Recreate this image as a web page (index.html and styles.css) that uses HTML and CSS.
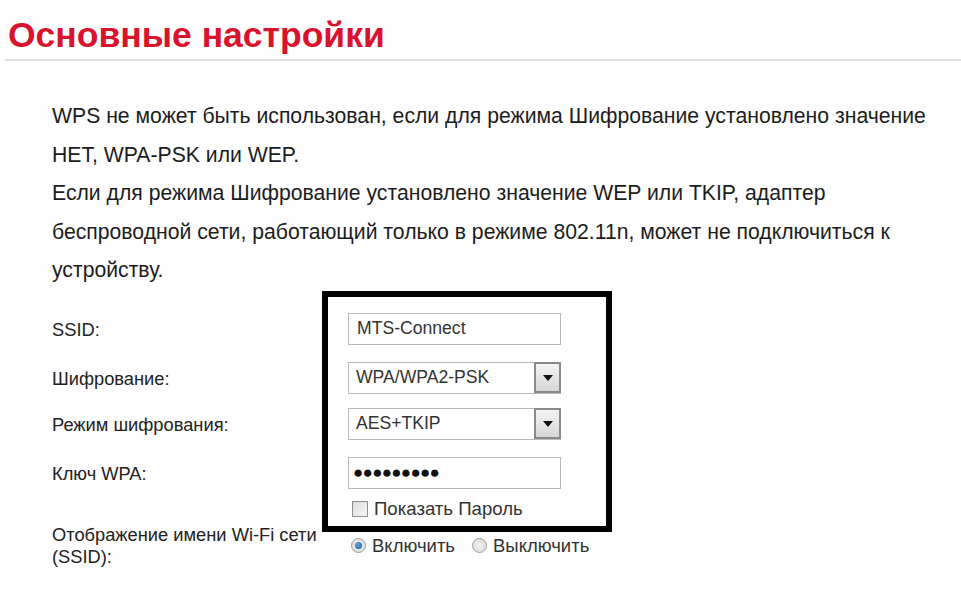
FILE: index.html
```html
<!DOCTYPE html>
<html lang="ru">
<head>
<meta charset="utf-8">
<title>Основные настройки</title>
<link rel="stylesheet" href="styles.css">
</head>
<body>
<div class="page">
  <h1 class="title">Основные настройки</h1>
  <div class="notice">
    <p>WPS не может быть использован, если для режима Шифрование установлено значение<br>НЕТ, WPA-PSK или WEP.</p>
    <p>Если для режима Шифрование установлено значение WEP или TKIP, адаптер<br>беспроводной сети, работающий только в режиме 802.11n, может не подключиться к<br>устройству.</p>
  </div>
  <div class="form">
    <div class="row r-ssid">
      <div class="label">SSID:</div>
      <div class="field"><div class="input">MTS-Connect</div></div>
    </div>
    <div class="row r-enc">
      <div class="label">Шифрование:</div>
      <div class="field"><div class="select"><span class="val">WPA/WPA2-PSK</span><span class="btn"><span class="tri"></span></span></div></div>
    </div>
    <div class="row r-mode">
      <div class="label">Режим шифрования:</div>
      <div class="field"><div class="select"><span class="val">AES+TKIP</span><span class="btn"><span class="tri"></span></span></div></div>
    </div>
    <div class="row r-key">
      <div class="label">Ключ WPA:</div>
      <div class="field"><div class="input pwd">●●●●●●●●●</div></div>
    </div>
    <div class="row r-show">
      <div class="label"></div>
      <div class="field check"><span class="box"></span><span>Показать Пароль</span></div>
    </div>
    <div class="row r-bcast">
      <div class="label">Отображение имени Wi-Fi сети<br>(SSID):</div>
      <div class="field radios">
        <span class="radio on"></span><span class="rtext">Включить</span>
        <span class="radio"></span><span class="rtext">Выключить</span>
      </div>
    </div>
  </div>
  <div class="highlight"></div>
</div>
</body>
</html>
```
FILE: styles.css
```css
html, body {
  margin: 0;
  padding: 0;
  background: #fefefe;
}
body {
  font-family: "Liberation Sans", Arial, sans-serif;
  color: #1a1a1a;
}
.page {
  position: relative;
  width: 961px;
  height: 605px;
  overflow: hidden;
}
.title {
  margin: 0 0 0 5px;
  padding: 13px 0 0 3px;
  height: 46px;
  font-size: 35.5px;
  line-height: 44px;
  font-weight: bold;
  color: #d9122e;
  border-bottom: 2px solid #dedede;
}
.notice {
  padding: 36px 0 0 52px;
  font-size: 21.2px;
  line-height: 38.6px;
  color: #1c1c1c;
}
.notice p {
  margin: 0;
}
.form {
  padding: 0 0 0 52px;
  margin-top: 23px;
  display: flex;
  flex-direction: column;
  font-size: 18.3px;
}
.row {
  display: flex;
  align-items: center;
}
.label {
  width: 296px;
  flex: none;
  color: #222;
  line-height: 22px;
}
.r-ssid .label, .r-enc .label, .r-mode .label, .r-key .label {
  padding-top: 2px;
}
.r-enc { margin-top: 17px; }
.r-mode { margin-top: 14px; }
.r-key { margin-top: 17px; }
.r-show { margin-top: 8px; height: 24px; }
.r-bcast { margin-top: 3px; }
.input, .select {
  box-sizing: border-box;
  width: 213px;
  height: 32px;
  border: 1px solid #b9b9b9;
  background: #fff;
  font-size: 17.6px;
  color: #333;
  display: flex;
  align-items: center;
}
.input {
  padding-left: 8px;
}
.pwd {
  font-size: 17px;
  letter-spacing: -0.7px;
  padding-left: 4px;
  color: #111;
}
.select .val {
  flex: 1;
  padding-left: 7px;
}
.select .btn {
  box-sizing: border-box;
  width: 27px;
  height: 31px;
  margin-right: -1px;
  border: 2px solid #8a8a8a;
  background: linear-gradient(#f4f4f4, #d6d6d6);
  display: flex;
  align-items: center;
  justify-content: center;
}
.tri {
  width: 0;
  height: 0;
  border-left: 5px solid transparent;
  border-right: 5px solid transparent;
  border-top: 6px solid #111;
}
.check {
  display: flex;
  align-items: center;
  font-size: 18.6px;
  color: #333;
}
.check .box {
  box-sizing: border-box;
  width: 16px;
  height: 16px;
  margin: 0 6px 0 4px;
  border: 1px solid #8e8e8e;
  background: linear-gradient(135deg, #dcdcdc, #f6f6f6);
}
.radios {
  display: flex;
  align-items: center;
  font-size: 18.5px;
  color: #333;
}
.radio {
  box-sizing: border-box;
  width: 15px;
  height: 15px;
  border-radius: 50%;
  border: 1px solid #9a9a9a;
  background: radial-gradient(circle, #f2f2f2 0, #d8d8d8 100%);
  margin: 0 6px 0 3px;
  position: relative;
}
.radio.on::after {
  content: "";
  position: absolute;
  left: 3px;
  top: 3px;
  width: 7px;
  height: 7px;
  border-radius: 50%;
  background: radial-gradient(circle at 40% 35%, #5fa7e0, #135a9c);
}
.rtext + .radio {
  margin-left: 17px;
}
.highlight {
  position: absolute;
  left: 322px;
  top: 291px;
  width: 278px;
  height: 229px;
  border: 6px solid #000;
  pointer-events: none;
}
```
